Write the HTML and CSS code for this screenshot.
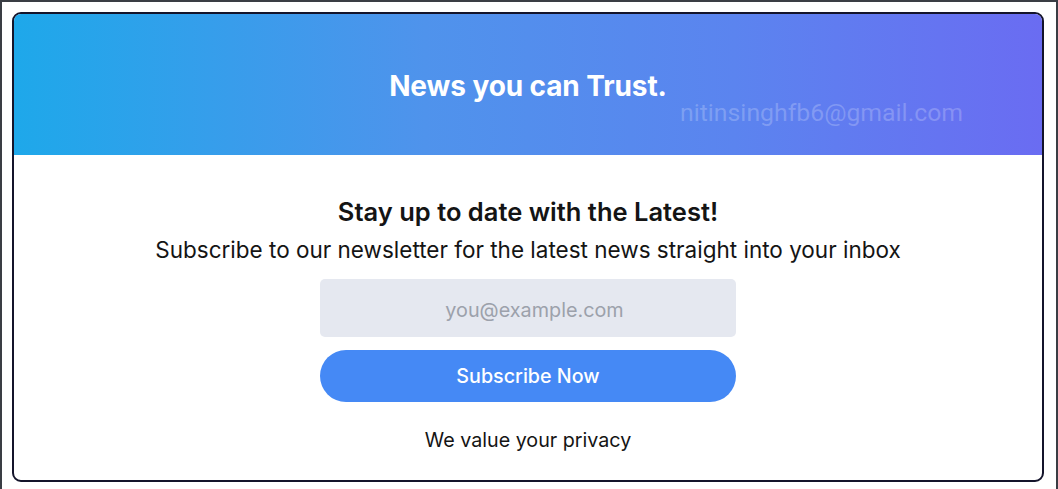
FILE: index.html
```html
<!DOCTYPE html>
<html lang="en">
<head>
<meta charset="utf-8">
<title>Newsletter</title>
<link rel="stylesheet" href="styles.css">
</head>
<body>
<div class="frame">
  <div class="card">
    <header class="hero">
      <h1 class="hero-title">News you can Trust.</h1>
      <span class="watermark">nitinsinghfb6@gmail.com</span>
    </header>
    <section class="content">
      <h2 class="heading">Stay up to date with the Latest!</h2>
      <p class="lead">Subscribe to our newsletter for the latest news straight into your inbox</p>
      <form class="form">
        <input class="email" type="email" placeholder="you@example.com">
        <button class="btn" type="button">Subscribe Now</button>
      </form>
      <p class="privacy">We value your privacy</p>
    </section>
  </div>
</div>
</body>
</html>
```
FILE: styles.css
```css
* { box-sizing: border-box; }
html, body { margin: 0; padding: 0; background: #fff; }
body {
  font-family: Inter, "Noto Sans", sans-serif;
  color: #111;
}
.frame {
  width: 1058px;
  height: 489px;
  border-top: 2px solid #3a3d44;
  border-left: 2px solid #3a3d44;
  border-right: 2px solid #3a3d44;
  padding: 10px 12px 0 10px;
}
.card {
  height: 470px;
  border: 2px solid #14142b;
  border-radius: 9px;
  overflow: hidden;
  display: flex;
  flex-direction: column;
  background: #fff;
}
.hero {
  position: relative;
  height: 141px;
  flex: none;
  background: linear-gradient(90deg, #1ea8ea 0%, #4f93ec 40%, #5b84ef 70%, #6a6cf2 100%);
  display: flex;
  align-items: center;
  justify-content: center;
}
.hero-title {
  margin: 0;
  padding-top: 3px;
  font-size: 28px;
  font-weight: 700;
  color: #fff;
  letter-spacing: -0.1px;
}
.watermark {
  position: absolute;
  left: 666px;
  top: 84px;
  font-family: Roboto, "Noto Sans", sans-serif;
  font-size: 24.8px;
  color: rgba(255,255,255,0.22);
}
.content {
  flex: 1;
  display: flex;
  flex-direction: column;
  align-items: center;
  padding-top: 41px;
}
.heading {
  margin: 0;
  font-size: 25.5px;
  font-weight: 600;
  line-height: 32px;
  color: #141414;
}
.lead {
  margin: 7px 0 0;
  font-size: 22.5px;
  line-height: 30px;
  color: #141414;
}
.form {
  margin-top: 14px;
  display: flex;
  flex-direction: column;
  gap: 13px;
  width: 416px;
}
.email {
  height: 58px;
  border: none;
  border-radius: 5px;
  background: #e5e8f0;
  font-family: inherit;
  font-size: 19.8px;
  text-align: center;
  color: #333;
  outline: none;
  padding: 3px 0 0 13px;
}
.email::placeholder { color: #9ca1ab; }
.btn {
  height: 52px;
  border: none;
  border-radius: 26px;
  background: #4589f5;
  color: #fff;
  font-family: inherit;
  font-size: 19.7px;
  font-weight: 500;
}
.privacy {
  margin: 24px 0 0;
  font-size: 19.7px;
  line-height: 28px;
  color: #141414;
}
```
